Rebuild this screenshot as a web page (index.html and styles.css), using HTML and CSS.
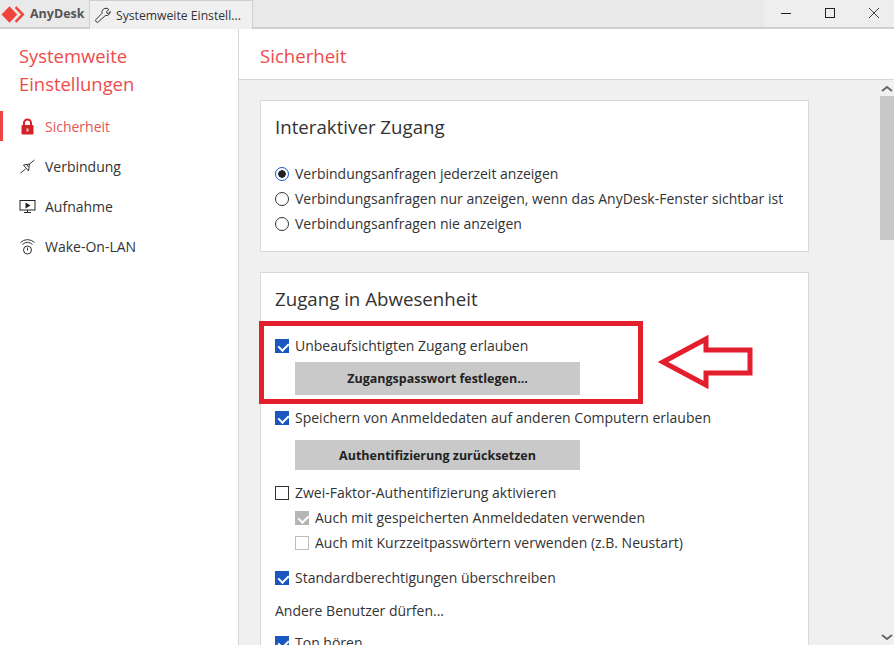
FILE: index.html
```html
<!DOCTYPE html>
<html lang="de">
<head>
    <meta charset="UTF-8">
    <title>AnyDesk</title>
    <link rel="stylesheet" href="styles.css">
</head>
<body>
    <header class="topbar">
        <div class="brand">
            <svg class="brand-logo" width="26" height="20" viewBox="0 0 26 20">
                <path d="M1.5 10.5l8-8.2 7.7 8.2-7.7 8.2z" fill="#ef443b"/>
                <path d="M16.5 2.3l8 8.2-8 8.2-1.8-1.8 6.3-6.4-6.3-6.4z" fill="#ef443b"/>
            </svg>
            <span>AnyDesk</span>
        </div>
        <div class="tab">
            <svg width="16" height="16" viewBox="0 0 16 16" fill="none" stroke="#333" stroke-width="1">
                <path d="M10.5 1.2a3.6 3.6 0 0 1 4 1.2l-2.4 2.2 .4 1.4 1.4 .4 1.8-2.1a3.8 3.8 0 0 1-4.7 4L4.2 14.5a1.6 1.6 0 0 1-2.5-2.3l6-6.2a3.8 3.8 0 0 1 2.8-4.8z" transform="translate(-.6 .2)"/>
            </svg>
            <span>Systemweite Einstell...</span>
        </div>
        <div class="window-controls">
            <svg width="12" height="12" viewBox="0 0 12 12"><path d="M1 6.5h10" stroke="#222" stroke-width="1"/></svg>
            <svg width="12" height="12" viewBox="0 0 12 12"><rect x="1.5" y="1.5" width="9" height="9" fill="none" stroke="#222"/></svg>
            <svg width="12" height="12" viewBox="0 0 12 12"><path d="M1 1l10 10M11 1L1 11" stroke="#444" stroke-width="1"/></svg>
        </div>
    </header>

    <div class="app">
        <aside class="sidebar">
            <h1>Systemweite<br>Einstellungen</h1>
            <nav>
                <a class="nav-item active">
                    <svg width="14" height="17" viewBox="0 0 14 17">
                        <path d="M3.5 8V5a3.5 3.5 0 0 1 7 0v3" fill="none" stroke="#d3232a" stroke-width="2"/>
                        <rect x="1" y="7" width="12" height="9.5" rx="1" fill="#d3232a"/>
                        <rect x="6" y="10.5" width="2" height="3" fill="#f6c6c6"/>
                    </svg>
                    Sicherheit
                </a>
                <a class="nav-item">
                    <svg width="16" height="16" viewBox="0 0 16 16" fill="none" stroke="#333" stroke-width="1">
                        <path d="M1 15l5-4M10 6l5-4M4 7l5 6 1-7zM7.5 7l1.5 2"/>
                    </svg>
                    Verbindung
                </a>
                <a class="nav-item">
                    <svg width="16" height="16" viewBox="0 0 16 16">
                        <rect x=".5" y="2.5" width="15" height="9.5" fill="none" stroke="#222"/>
                        <path d="M6 4.5l5 3-5 3z" fill="#222"/>
                        <path d="M8 12v2M4.5 14.5h7" stroke="#222"/>
                    </svg>
                    Aufnahme
                </a>
                <a class="nav-item">
                    <svg width="16" height="17" viewBox="0 0 16 17" fill="none" stroke="#333" stroke-width="1">
                        <path d="M1 4.5a10 10 0 0 1 14 0M3 6.5a7 7 0 0 1 10 0"/>
                        <circle cx="8" cy="12" r="4"/>
                        <path d="M8 9.5v3"/>
                    </svg>
                    Wake-On-LAN
                </a>
            </nav>
        </aside>

        <main class="main">
            <div class="page-title">Sicherheit</div>
            <div class="scroll-area">
                <div class="content">
                    <section class="card">
                        <h2>Interaktiver Zugang</h2>
                        <div class="group">
                            <label class="option"><span class="radio on"></span><span class="label">Verbindungsanfragen jederzeit anzeigen</span></label>
                            <label class="option"><span class="radio"></span><span class="label">Verbindungsanfragen nur anzeigen, wenn das AnyDesk-Fenster sichtbar ist</span></label>
                            <label class="option"><span class="radio"></span><span class="label">Verbindungsanfragen nie anzeigen</span></label>
                        </div>
                    </section>

                    <section class="card">
                        <h2>Zugang in Abwesenheit</h2>
                        <div class="group">
                            <label class="option"><span class="check on"></span><span class="label">Unbeaufsichtigten Zugang erlauben</span></label>
                            <button class="btn btn-first">Zugangspasswort festlegen...</button>
                            <label class="option after-btn"><span class="check on"></span><span class="label">Speichern von Anmeldedaten auf anderen Computern erlauben</span></label>
                            <button class="btn">Authentifizierung zurücksetzen</button>
                            <label class="option after-btn"><span class="check"></span><span class="label">Zwei-Faktor-Authentifizierung aktivieren</span></label>
                            <label class="option sub"><span class="check on disabled"></span><span class="label">Auch mit gespeicherten Anmeldedaten verwenden</span></label>
                            <label class="option sub"><span class="check disabled"></span><span class="label">Auch mit Kurzzeitpasswörtern verwenden (z.B. Neustart)</span></label>
                            <label class="option after-btn"><span class="check on"></span><span class="label">Standardberechtigungen überschreiben</span></label>
                            <div class="option note"><span class="label">Andere Benutzer dürfen...</span></div>
                            <label class="option"><span class="check on"></span><span class="label">Ton hören</span></label>
                        </div>
                    </section>
                </div>
                <div class="scrollbar">
                    <svg class="arrow-up" width="14" height="8" viewBox="0 0 14 8"><path d="M2 6l5-4 5 4" fill="none" stroke="#666" stroke-width="2"/></svg>
                    <div class="thumb"></div>
                    <svg class="arrow-down" width="14" height="8" viewBox="0 0 14 8"><path d="M2 2l5 4 5-4" fill="none" stroke="#666" stroke-width="2"/></svg>
                </div>
            </div>
        </main>
    </div>

    <!-- annotation drawn on top of the screenshot -->
    <div class="mark-box"></div>
    <svg class="mark-arrow" width="100" height="60" viewBox="655 332 100 60">
        <path d="M663 362l43-23v11h44v23h-44v12z" fill="#fff" stroke="#e31e2d" stroke-width="5"/>
    </svg>
</body>
</html>
```

FILE: styles.css
```css
* {
    box-sizing: border-box;
}

html, body {
    height: 100%;
}

body {
    margin: 0;
    overflow: hidden;
    position: relative;
    display: flex;
    flex-direction: column;
    font-family: "Open Sans", sans-serif;
    font-size: 14px;
    color: #333;
    background-color: #f0f0f0;
}

.topbar {
    flex: none;
    height: 29px;
    display: flex;
    background-color: #e9e9e9;
    border-bottom: 2px solid #cfcfcf;
}

.brand {
    width: 89px;
    display: flex;
    align-items: center;
    gap: 4px;
    font-weight: bold;
    font-size: 12.5px;
    color: #555;
}

.tab {
    width: 164px;
    height: 29px;
    display: flex;
    align-items: center;
    gap: 5px;
    padding-left: 5px;
    font-size: 12.2px;
    background-color: #f0f0f0;
    border: 1px solid #cfcfcf;
    border-bottom: none;
}

.window-controls {
    margin-left: auto;
    width: 130px;
    display: flex;
    align-items: center;
    justify-content: space-between;
    padding: 0 14px 1px 16px;
    background-color: #eeeeee;
}

.app {
    flex: 1;
    display: flex;
    min-height: 0;
}

.sidebar {
    width: 239px;
    flex: none;
    background-color: #fff;
    border-right: 1px solid #d6d6d6;
}

.sidebar h1 {
    margin: 13px 0 13px 19px;
    font-size: 18.4px;
    font-weight: normal;
    line-height: 28px;
    color: #ee4b4b;
}

.nav-item {
    height: 40px;
    display: flex;
    align-items: center;
    gap: 9px;
    border-left: 3px solid transparent;
    padding-left: 16px;
}

.nav-item svg {
    width: 17px;
}

.nav-item.active {
    color: #e55555;
    height: 30px;
    margin: 5px 0;
    border-left-color: #ef4444;
}

.main {
    flex: 1;
    display: flex;
    flex-direction: column;
    min-width: 0;
}

.page-title {
    flex: none;
    height: 51px;
    padding: 14px 0 0 21px;
    font-size: 18.6px;
    color: #ee4b4b;
    background-color: #fff;
    border-bottom: 1px solid #d6d6d6;
}

.scroll-area {
    flex: 1;
    display: flex;
    min-height: 0;
    overflow: hidden;
}

.content {
    flex: 1;
    padding: 20px 71px 0 21px;
}

.card {
    background-color: #fff;
    border: 1px solid #d9d9d9;
    padding: 10px 14px 15px;
    margin-bottom: 20px;
}

.card h2 {
    margin: 0 0 18px;
    height: 32px;
    line-height: 32px;
    font-size: 18.7px;
    font-weight: normal;
}

.option {
    height: 25px;
    display: flex;
    align-items: center;
    gap: 6px;
    white-space: nowrap;
}

.label {
    margin-top: -1px;
}

.option.after-btn {
    margin-top: 10px;
}

.option.sub {
    padding-left: 20px;
}

.option.note {
    margin: 8px 0 7px;
}

.radio {
    width: 14px;
    height: 14px;
    flex: none;
    border: 1.5px solid #333;
    border-radius: 50%;
}

.radio.on {
    border-color: #1b57c0;
    background: radial-gradient(circle, #222 0 3.5px, #fff 4px);
}

.check {
    width: 14px;
    height: 14px;
    flex: none;
    position: relative;
    border: 1px solid #333;
}

.check.on {
    background-color: #1b57c0;
    border-color: #1b57c0;
}

.check.on::after {
    content: "";
    position: absolute;
    left: 3.5px;
    top: 1px;
    width: 5px;
    height: 8px;
    border: solid #fff;
    border-width: 0 2px 2px 0;
    transform: rotate(45deg);
}

.check.disabled {
    border-color: #bdbdbd;
}

.check.on.disabled {
    background-color: #b5b5b5;
    border-color: #b5b5b5;
}

.btn {
    display: block;
    width: 285px;
    height: 30px;
    margin: 10px 0 0 20px;
    font-family: inherit;
    font-size: 12.5px;
    font-weight: bold;
    color: #222;
    background-color: #c9c9c9;
    border: none;
}

.btn-first {
    height: 33px;
    margin-top: 4px;
}

.scrollbar {
    width: 14px;
    flex: none;
    position: relative;
    padding-top: 16px;
}

.thumb {
    height: 144px;
    background-color: #c8c8c8;
}

.arrow-up {
    position: absolute;
    top: 5px;
    left: 0;
}

.arrow-down {
    position: absolute;
    bottom: 4px;
    left: 0;
}

.mark-box {
    position: absolute;
    left: 259px;
    top: 321px;
    width: 384px;
    height: 83px;
    border: 5px solid #e31e2d;
}

.mark-arrow {
    position: absolute;
    left: 655px;
    top: 332px;
}
```
